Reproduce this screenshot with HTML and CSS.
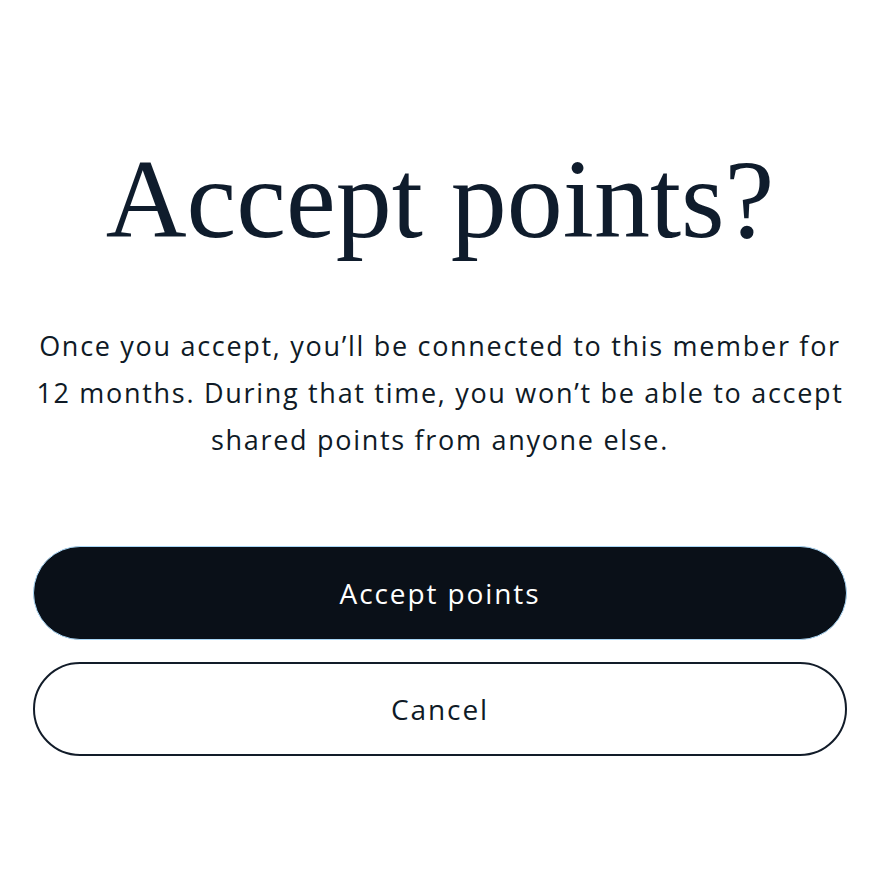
FILE: index.html
```html
<!DOCTYPE html>
<html lang="en">
<head>
<meta charset="utf-8">
<link rel="stylesheet" href="styles.css">
</head>
<body>
<main class="dialog">
  <h1 class="title">Accept points?</h1>
  <p class="body">Once you accept, you’ll be connected to this member for 12 months. During that time, you won’t be able to accept shared points from anyone else.</p>
  <div class="actions">
    <button class="btn btn-primary">Accept points</button>
    <button class="btn btn-secondary">Cancel</button>
  </div>
</main>
</body>
</html>
```
FILE: styles.css
```css
html, body {
  margin: 0;
  padding: 0;
  background: #ffffff;
}
.dialog {
  box-sizing: border-box;
  width: 880px;
  padding: 139px 28px 0;
  display: flex;
  flex-direction: column;
  align-items: stretch;
}
.title {
  margin: 0;
  font-family: "Liberation Serif", serif;
  font-weight: 400;
  font-size: 112px;
  line-height: 120px;
  color: #0f1c2c;
  text-align: center;
}
.body {
  margin: 63px 0 0;
  font-family: "Open Sans", sans-serif;
  font-size: 27px;
  letter-spacing: 1.7px;
  line-height: 47px;
  color: #0f1a26;
  text-align: center;
}
.actions {
  margin: 83px 5px 0;
  display: flex;
  flex-direction: column;
  gap: 22px;
}
.btn {
  box-sizing: border-box;
  height: 94px;
  border-radius: 47px;
  font-family: "Open Sans", sans-serif;
  font-size: 28px;
  letter-spacing: 1.9px;
  cursor: pointer;
}
.btn-primary {
  background: #0a1018;
  color: #ffffff;
  border: 1.5px solid #a9d6f5;
}
.btn-secondary {
  background: #ffffff;
  color: #0f1a26;
  border: 2px solid #121c29;
}
```
